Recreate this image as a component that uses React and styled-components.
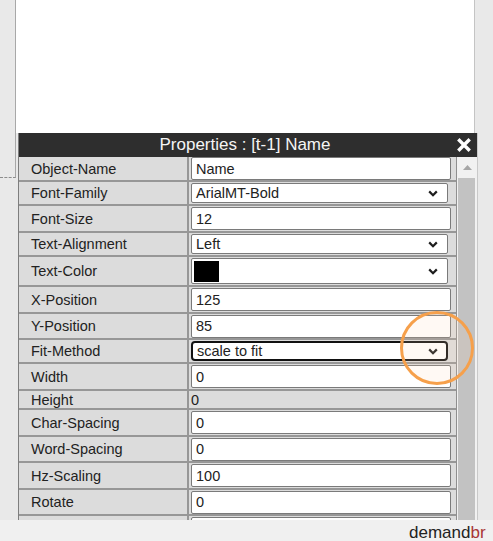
import React from "react";
import styled, { createGlobalStyle, css } from "styled-components";

const GlobalStyle = createGlobalStyle`
  html, body {
    margin: 0;
    padding: 0;
    background: #e9e9e9;
  }
  body {
    font-family: "Liberation Sans", Arial, sans-serif;
    color: #222;
  }
`;

const SPage = styled.div`
  width: 493px;
  height: 541px;
  display: flex;
  flex-direction: column;
  overflow: hidden;
`;

const SWorkspace = styled.div`
  position: relative;
  height: 520px;
  flex: none;
  display: flex;
  flex-direction: column;
  overflow: hidden;
  background: #e9e9e9;
`;

const SCanvas = styled.div`
  box-sizing: border-box;
  margin-left: 15px;
  width: 460px;
  height: 133px;
  flex: none;
  background: #fff;
  border-left: 1px solid #a8a8a8;
  border-right: 1px solid #c4c4c4;
`;

const SStage = styled.div`
  display: flex;
  flex: 1;
  min-height: 0;
`;

const SGutter = styled.div`
  width: 18px;
  flex: none;
`;

// guide line that leaves the canvas to the left of the panel
const SGuideStub = styled.div`
  box-sizing: border-box;
  width: 16px;
  height: 45px;
  border-right: 1px solid #a8a8a8;
  border-bottom: 1px dashed #8c8c8c;
`;

const SPanel = styled.div`
  box-sizing: border-box;
  width: 460px;
  flex: none;
  display: flex;
  flex-direction: column;
  border-left: 1px solid #7e7e7e;
  border-right: 1px solid #c9c9c9;
  background: #dcdcdc;
`;

const SHeader = styled.div`
  height: 24px;
  flex: none;
  display: grid;
  grid-template-columns: 1fr auto 1fr;
  align-items: center;
  background: #2e2e2e;
  color: #f5f5f5;
  font-size: 17px;
  padding-right: 6px;
`;

const STitle = styled.div`
  grid-column: 2;
  white-space: nowrap;
  line-height: 24px;
`;

const SCloseButton = styled.button`
  grid-column: 3;
  justify-self: end;
  display: flex;
  align-items: center;
  border: 0;
  padding: 0;
  background: transparent;
  cursor: pointer;
`;

const SBody = styled.div`
  display: flex;
  flex: 1;
  min-height: 0;
`;

const STable = styled.div`
  box-sizing: border-box;
  width: 438px;
  flex: none;
  display: flex;
  flex-direction: column;
  border-right: 1px solid #8f8f8f;
`;

const SRow = styled.div`
  box-sizing: border-box;
  height: ${(props) => props.$h}px;
  flex: none;
  display: grid;
  grid-template-columns: 170px 1fr;
  border-bottom: 2px solid #979797;
`;

const SLabel = styled.div`
  box-sizing: border-box;
  display: flex;
  align-items: center;
  padding-left: 12px;
  font-size: 14.5px;
  color: #222;
  border-right: 2px solid #979797;
  white-space: nowrap;
`;

const SValue = styled.div`
  display: flex;
  align-items: center;
  padding-left: 2px;
  font-size: 14.5px;
`;

const SInput = styled.input`
  box-sizing: border-box;
  width: 260px;
  height: 23px;
  margin: 0;
  padding: 0 4px;
  border: 1px solid #7a7a7a;
  border-radius: 2px;
  background: #fff;
  font-family: "Liberation Sans", Arial, sans-serif;
  font-size: 14.5px;
  color: #222;
  outline: none;
`;

const SSelect = styled.div`
  box-sizing: border-box;
  width: 257px;
  height: ${(props) => (props.$tall ? 26 : 20)}px;
  display: flex;
  align-items: center;
  justify-content: space-between;
  padding: 0 9px 0 4px;
  border: 1px solid #7a7a7a;
  border-radius: 2px;
  background: #fff;
  color: #222;
  white-space: nowrap;
  ${(props) =>
    props.$tall &&
    css`
      padding-left: 2px;
    `}
  ${(props) =>
    props.$focused &&
    css`
      border: 2px solid #111;
      border-radius: 4px;
      padding-left: 4px;
      padding-right: 8px;
    `}
`;

const SSwatch = styled.span`
  width: 25px;
  height: 21px;
  background: ${(props) => props.$color};
`;

const SPlain = styled.span`
  color: #222;
`;

const SScrollbar = styled.div`
  width: 20px;
  flex: none;
  display: flex;
  flex-direction: column;
  background: #f1f1f1;
`;

const SScrollArrow = styled.div`
  height: 21px;
  flex: none;
  display: flex;
  align-items: center;
  justify-content: center;
`;

const SScrollThumb = styled.div`
  flex: 1;
  margin: 0 2px 0 1px;
  background: #c2c2c2;
`;

// orange highlight ring drawn over the Fit-Method dropdown
const SHighlight = styled.div`
  position: absolute;
  left: 400px;
  top: 311px;
  width: 74px;
  height: 74px;
  box-sizing: border-box;
  border: 3px solid #f6a04b;
  border-radius: 50%;
  background: rgba(252, 214, 180, 0.14);
  pointer-events: none;
`;

const SFooter = styled.div`
  height: 21px;
  flex: none;
  box-sizing: border-box;
  padding: 5px 0 0 409px;
  background: #f0f0f0;
  font-size: 17px;
  line-height: 16px;
  color: #222;
  white-space: nowrap;
  overflow: hidden;
`;

const SBrand = styled.span`
  color: #a83636;
`;

const Chevron = () => (
  <svg width="10" height="7" viewBox="0 0 10 7">
    <path d="M1.2 1.4 L5 5.2 L8.8 1.4" fill="none" stroke="#1e1e1e" strokeWidth="2.2" />
  </svg>
);

const CloseIcon = () => (
  <svg width="14" height="14" viewBox="0 0 14 14">
    <path d="M2.5 2.5 L11.5 11.5 M11.5 2.5 L2.5 11.5" fill="none" stroke="#fff" strokeWidth="3.4" strokeLinecap="square" />
  </svg>
);

const ArrowUp = () => (
  <svg width="9" height="5" viewBox="0 0 9 5">
    <polygon points="0,5 4.5,0 9,5" fill="#a6a6a6" />
  </svg>
);

const properties = [
  { label: "Object-Name", h: 25, type: "input", value: "Name" },
  { label: "Font-Family", h: 24, type: "select", value: "ArialMT-Bold" },
  { label: "Font-Size", h: 27, type: "input", value: "12" },
  { label: "Text-Alignment", h: 24, type: "select", value: "Left" },
  { label: "Text-Color", h: 30, type: "color", value: "#000" },
  { label: "X-Position", h: 27, type: "input", value: "125" },
  { label: "Y-Position", h: 26, type: "input", value: "85" },
  { label: "Fit-Method", h: 24, type: "select", value: "scale to fit", focused: true },
  { label: "Width", h: 27, type: "input", value: "0" },
  { label: "Height", h: 19, type: "text", value: "0" },
  { label: "Char-Spacing", h: 27, type: "input", value: "0" },
  { label: "Word-Spacing", h: 26, type: "input", value: "0" },
  { label: "Hz-Scaling", h: 27, type: "input", value: "100" },
  { label: "Rotate", h: 26, type: "input", value: "0" },
  { label: "", h: 27, type: "input", value: "" },
];

const renderValue = (prop) => {
  if (prop.type === "input") {
    return <SInput defaultValue={prop.value} />;
  } else if (prop.type === "select") {
    return (
      <SSelect $focused={prop.focused}>
        <span>{prop.value}</span>
        <Chevron />
      </SSelect>
    );
  } else if (prop.type === "color") {
    return (
      <SSelect $tall>
        <SSwatch $color={prop.value} />
        <Chevron />
      </SSelect>
    );
  }
  return <SPlain>{prop.value}</SPlain>;
};

const App = () => {
  return (
    <SPage>
      <GlobalStyle />
      <SWorkspace>
        <SCanvas />
        <SStage>
          <SGutter>
            <SGuideStub />
          </SGutter>
          <SPanel>
            <SHeader>
              <STitle>Properties : [t-1] Name</STitle>
              <SCloseButton aria-label="Close">
                <CloseIcon />
              </SCloseButton>
            </SHeader>
            <SBody>
              <STable>
                {properties.map((prop, i) => (
                  <SRow key={i} $h={prop.h}>
                    <SLabel>{prop.label}</SLabel>
                    <SValue>{renderValue(prop)}</SValue>
                  </SRow>
                ))}
              </STable>
              <SScrollbar>
                <SScrollArrow>
                  <ArrowUp />
                </SScrollArrow>
                <SScrollThumb />
              </SScrollbar>
            </SBody>
          </SPanel>
        </SStage>
        <SHighlight />
      </SWorkspace>
      <SFooter>
        demand<SBrand>br</SBrand>
      </SFooter>
    </SPage>
  );
};

export default App;
